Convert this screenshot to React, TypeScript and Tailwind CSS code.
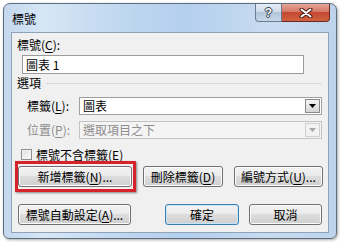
import React from "react";

const ui = "font-['Noto_Sans_CJK_TC','Liberation_Sans',sans-serif]";

function U({ children }: { children: React.ReactNode }) {
  return <span className="underline underline-offset-2">{children}</span>;
}

function Btn({
  w,
  def,
  children,
}: {
  w: string;
  def?: boolean;
  children: React.ReactNode;
}) {
  return (
    <div
      className={`${w} h-[21px] shrink-0 rounded-[3px] border flex items-center justify-center text-[12px] leading-none text-black bg-[linear-gradient(#f2f2f2,#ebebeb_45%,#dddddd_50%,#cfcfcf)] ${
        def
          ? "border-[#3c7fb1] shadow-[inset_0_0_0_1px_#c5e6f8]"
          : "border-[#707070] shadow-[inset_0_0_0_1px_#fbfbfb]"
      }`}
    >
      {children}
    </div>
  );
}

function Combo({ value, disabled }: { value: string; disabled?: boolean }) {
  return (
    <div
      className={`flex-1 h-[18px] border flex items-center ${
        disabled ? "border-[#c3c3c3] bg-[#f4f4f4]" : "border-[#a0a0a0] bg-white"
      }`}
    >
      <span
        className={`flex-1 pl-[3px] text-[12px] leading-none ${
          disabled ? "text-[#8d8d8d]" : "text-black"
        }`}
      >
        {value}
      </span>
      <div
        className={`w-[15px] h-[14px] mr-px flex items-center justify-center border ${
          disabled
            ? "border-[#d0d0d0] bg-[#f2f2f2]"
            : "border-[#8a8a8a] bg-[linear-gradient(#f2f2f2,#e6e6e6_50%,#d4d4d4)]"
        }`}
      >
        <svg width="7" height="4" viewBox="0 0 7 4">
          <path d="M0 0h7L3.5 4z" fill={disabled ? "#a8a8a8" : "#000"} />
        </svg>
      </div>
    </div>
  );
}

export default function App() {
  return (
    <div className={`w-[342px] h-[244px] bg-white pt-[3px] pl-[3px] ${ui}`}>
      <div className="w-[334px] h-[236px] rounded-t-[7px] rounded-b-[6px] border border-[#5d6d7e] bg-[linear-gradient(90deg,#c4d8ee_0%,#d6e6f5_12%,#bcd5ef_40%,#b4cfee_55%,#c8dbf0_80%,#bdd4ec_100%)] px-[7px] pb-[5px] flex flex-col shadow-[1px_1px_3px_rgba(0,0,0,0.35)]">
        {/* title bar */}
        <div className="h-[28px] flex items-start shrink-0">
          <span className="mt-[8px] ml-px text-[12px] leading-[13px] text-black">標號</span>
          <div className="ml-auto -mr-px flex">
            <div className="w-[27px] h-[18px] rounded-bl-[4px] border border-t-0 border-[#6b7c90] bg-[linear-gradient(#e4edf6,#cfdcea_45%,#b3c6db_50%,#c5d6e7)] flex items-center justify-center">
              <span className="text-white text-[12px] font-bold leading-none [text-shadow:0_0_1px_#303c4a,1px_0_0_#303c4a,-1px_0_0_#303c4a,0_1px_0_#303c4a,0_-1px_0_#303c4a] font-['Liberation_Sans',sans-serif]">
                ?
              </span>
            </div>
            <div className="w-[48px] h-[18px] rounded-br-[4px] border border-l-0 border-t-0 border-[#6a2a22] bg-[linear-gradient(#e5a596,#d47867_45%,#c54832_50%,#d0623f)] flex items-center justify-center">
              <svg width="14" height="10" viewBox="0 0 14 10">
                <path d="M2.5 1.5L11.5 8.5M11.5 1.5L2.5 8.5" stroke="#4a1c16" strokeWidth="4" strokeLinecap="round" />
                <path d="M2.5 1.5L11.5 8.5M11.5 1.5L2.5 8.5" stroke="#fff" strokeWidth="2" strokeLinecap="round" />
              </svg>
            </div>
          </div>
        </div>

        {/* client */}
        <div className="h-[201px] shrink-0 border border-[#8ea2b8] bg-[#f0f0f0] pl-[5px] pr-[6px] flex flex-col text-[12px] text-black">
          <div className="mt-[5px] h-[14px] leading-[14px]">
            標號(<U>C</U>):
          </div>
          <div className="mt-[3px] ml-[5px] w-[282px] h-[19px] border border-[#9c9c9c] bg-white flex items-center pl-[3px] leading-none">
            圖表 1
          </div>
          <div className="mt-[2px] h-[14px] flex items-center">
            <span className="leading-[14px]">選項</span>
            <div className="flex-1 ml-[5px] h-px bg-[#d5dde4]" />
          </div>
          <div className="mt-[7px] h-[18px] flex items-center pl-[10px]">
            <span className="w-[52px] shrink-0 leading-none">
              標籤(<U>L</U>):
            </span>
            <Combo value="圖表" />
          </div>
          <div className="mt-[6px] h-[18px] flex items-center pl-[10px]">
            <span className="w-[52px] shrink-0 leading-none text-[#8d8d8d]">
              位置(<U>P</U>):
            </span>
            <Combo value="選取項目之下" disabled />
          </div>
          <div className="mt-[9px] h-[13px] flex items-center pl-[4px]">
            <div className="w-[11px] h-[11px] border border-[#8e8f8f] bg-[linear-gradient(135deg,#dcdcdc,#fdfdfd)] shadow-[inset_0_0_0_1px_#f4f4f4]" />
            <span className="ml-[4px] leading-none">
              標號不含標籤(<U>E</U>)
            </span>
          </div>
          <div className="mt-[5px] flex pl-px gap-[11px]">
            <div className="relative">
              <Btn w="w-[114px]">
                新增標籤(<U>N</U>)...
              </Btn>
              <div className="absolute -left-[3px] -top-[5px] w-[121px] h-[31px] border-[3px] border-[#d6232a] shadow-[1px_1px_2px_rgba(0,0,0,0.45)]" />
            </div>
            <Btn w="w-[80px]">
              刪除標籤(<U>D</U>)
            </Btn>
            <Btn w="w-[89px]">
              編號方式(<U>U</U>)...
            </Btn>
          </div>
          <div className="mt-[17px] flex pl-px">
            <Btn w="w-[113px]">
              標號自動設定(<U>A</U>)...
            </Btn>
            <div className="ml-[34px]">
              <Btn w="w-[74px]" def>
                確定
              </Btn>
            </div>
            <div className="ml-[10px]">
              <Btn w="w-[73px]">取消</Btn>
            </div>
          </div>
        </div>
      </div>
    </div>
  );
}
